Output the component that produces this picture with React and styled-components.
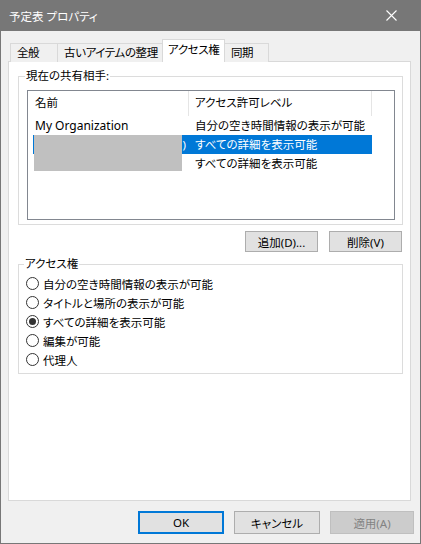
import React, { useState } from 'react';
import styled, { createGlobalStyle } from 'styled-components';

const GlobalStyle = createGlobalStyle`
  html, body {
    margin: 0;
    padding: 0;
    background: #f0f0f0;
  }
  * {
    box-sizing: border-box;
  }
  body {
    font-family: "Noto Sans", "Noto Sans CJK JP", sans-serif;
    font-size: 11.5px;
    font-feature-settings: "palt";
    color: #000;
  }
`;

const Window = styled.div`
  width: 421px;
  height: 544px;
  display: flex;
  flex-direction: column;
  background: #f0f0f0;
  border: 1px solid #777;
  border-top: none;
`;

const TitleBar = styled.div`
  height: 31px;
  flex: none;
  display: flex;
  align-items: center;
  justify-content: space-between;
  background: #777;
  color: #fff;
  padding: 0 24px 0 9px;
  margin: 0 -1px;
`;

const CloseIcon = () => (
  <svg width="11" height="11" viewBox="0 0 11 11">
    <path d="M0.5 0.5 L10.5 10.5 M10.5 0.5 L0.5 10.5" stroke="#fff" strokeWidth="1.1" />
  </svg>
);

const TabStrip = styled.div`
  display: flex;
  align-items: flex-end;
  height: 23px;
  margin-top: 8px;
  padding-left: 9px;
  position: relative;
  z-index: 1;
`;

const Tab = styled.div`
  width: ${(p) => p.$w}px;
  height: ${(p) => (p.$active ? 23 : 19)}px;
  margin-left: ${(p) => (p.$first ? 0 : -1)}px;
  padding: ${(p) => (p.$active ? '2px 0 0 5px' : '1px 0 0 6px')};
  border: 1px solid #d9d9d9;
  border-bottom: none;
  background: ${(p) => (p.$active ? '#fff' : '#f0f0f0')};
  line-height: 16px;
  letter-spacing: -0.4px;
  white-space: nowrap;
  overflow: hidden;
  cursor: default;
  position: relative;
  z-index: ${(p) => (p.$active ? 2 : 1)};
`;

const Panel = styled.div`
  height: 440px;
  margin: -1px 9px 0 7px;
  background: #fff;
  border: 1px solid #d9d9d9;
  padding: 6px 7px 0 9px;
  display: flex;
  flex-direction: column;
`;

const Group = styled.fieldset`
  margin: ${(p) => p.$top}px 0 0 0;
  padding: ${(p) => p.$pad};
  border: 1px solid #dcdcdc;
  min-width: 0;
`;

const Legend = styled.legend`
  padding: 0 1px;
  margin-left: -2px;
  line-height: 16px;
`;

const ListView = styled.div`
  position: relative;
  height: 130px;
  border: 1px solid #828790;
  background: #fff;
`;

const HeaderRow = styled.div`
  display: flex;
  height: 25px;
`;

const HeaderCell = styled.div`
  width: ${(p) => p.$w}px;
  padding-left: ${(p) => p.$pad}px;
  border-right: 1px solid #e5e5e5;
  line-height: 24px;
  white-space: nowrap;
`;

const Row = styled.div`
  display: grid;
  grid-template-columns: 156px 1fr;
  width: 339px;
  height: 19px;
  margin-left: 5px;
  line-height: 19px;
  white-space: nowrap;
  background: ${(p) => (p.$selected ? '#0078d7' : 'transparent')};
  color: ${(p) => (p.$selected ? '#fff' : '#000')};
`;

const NameCell = styled.div`
  padding: 0 3px 0 2px;
  overflow: hidden;
  font-size: ${(p) => (p.$latin ? '12px' : 'inherit')};
  text-align: ${(p) => (p.$end ? 'right' : 'left')};
`;

const LevelCell = styled.div`
  padding-left: 6px;
  overflow: hidden;
`;

const Redaction = styled.div`
  position: absolute;
  left: 6px;
  top: 44px;
  width: 148px;
  height: 36px;
  background: #c0c0c0;
`;

const ButtonRow = styled.div`
  display: flex;
  justify-content: flex-end;
  gap: 11px;
  margin-top: 6px;
  padding-right: 1px;
`;

const Button = styled.button`
  width: ${(p) => p.$w}px;
  height: ${(p) => p.$h}px;
  padding: 0;
  font: inherit;
  background: ${(p) => (p.disabled ? '#cccccc' : '#e1e1e1')};
  color: ${(p) => (p.disabled ? '#838383' : '#000')};
  border: ${(p) =>
    p.$default ? '2px solid #0078d7' : p.disabled ? '1px solid #bfbfbf' : '1px solid #adadad'};
  border-radius: 0;
  cursor: default;
`;

const RadioRow = styled.label`
  display: flex;
  align-items: center;
  gap: 4px;
  height: 19px;
  white-space: nowrap;
`;

const RadioDot = styled.span`
  width: 13px;
  height: 13px;
  flex: none;
  border-radius: 50%;
  border: 1px solid #333;
  background: #fff;
  display: flex;
  align-items: center;
  justify-content: center;

  &::after {
    content: '';
    width: 7px;
    height: 7px;
    border-radius: 50%;
    background: ${(p) => (p.$checked ? '#333' : 'transparent')};
  }
`;

const Footer = styled.div`
  flex: 1;
  display: flex;
  justify-content: flex-end;
  gap: 10px;
  padding: 10px 6px 0 0;
`;

const tabs = [
  { label: '全般', w: 48 },
  { label: '古いアイテムの整理', w: 106 },
  { label: 'アクセス権', w: 63 },
  { label: '同期', w: 45 },
];

const shares = [
  { name: 'My Organization', level: '自分の空き時間情報の表示が可能', latin: true },
  { name: ')', level: 'すべての詳細を表示可能', selected: true, end: true },
  { name: '', level: 'すべての詳細を表示可能' },
];

const levels = [
  '自分の空き時間情報の表示が可能',
  'タイトルと場所の表示が可能',
  'すべての詳細を表示可能',
  '編集が可能',
  '代理人',
];

export default function App() {
  const [activeTab, setActiveTab] = useState(2);
  const [level, setLevel] = useState(2);

  return (
    <>
      <GlobalStyle />
      <Window>
        <TitleBar>
          <span>予定表 プロパティ</span>
          <CloseIcon />
        </TitleBar>

        <TabStrip>
          {tabs.map((t, i) => (
            <Tab
              key={t.label}
              $w={t.w}
              $first={i === 0}
              $active={i === activeTab}
              onClick={() => setActiveTab(i)}
            >
              {t.label}
            </Tab>
          ))}
        </TabStrip>

        <Panel>
          <Group $top={0} $pad="6px 7px 4px 8px">
            <Legend>現在の共有相手:</Legend>
            <ListView>
              <HeaderRow>
                <HeaderCell $w={161} $pad={7}>名前</HeaderCell>
                <HeaderCell $w={183} $pad={6}>アクセス許可レベル</HeaderCell>
              </HeaderRow>
              {shares.map((s, i) => (
                <Row key={i} $selected={s.selected}>
                  <NameCell $end={s.end} $latin={s.latin}>{s.name}</NameCell>
                  <LevelCell>{s.level}</LevelCell>
                </Row>
              ))}
              <Redaction />
            </ListView>
          </Group>

          <ButtonRow>
            <Button $w={73} $h={21}>追加(D)...</Button>
            <Button $w={73} $h={21}>削除(V)</Button>
          </ButtonRow>

          <Group $top={4} $pad="2px 7px 4px 7px">
            <Legend>アクセス権</Legend>
            {levels.map((l, i) => (
              <RadioRow key={l} onClick={() => setLevel(i)}>
                <RadioDot $checked={i === level} />
                {l}
              </RadioRow>
            ))}
          </Group>
        </Panel>

        <Footer>
          <Button $w={86} $h={23} $default>OK</Button>
          <Button $w={86} $h={23}>キャンセル</Button>
          <Button $w={84} $h={23} disabled>適用(A)</Button>
        </Footer>
      </Window>
    </>
  );
}
